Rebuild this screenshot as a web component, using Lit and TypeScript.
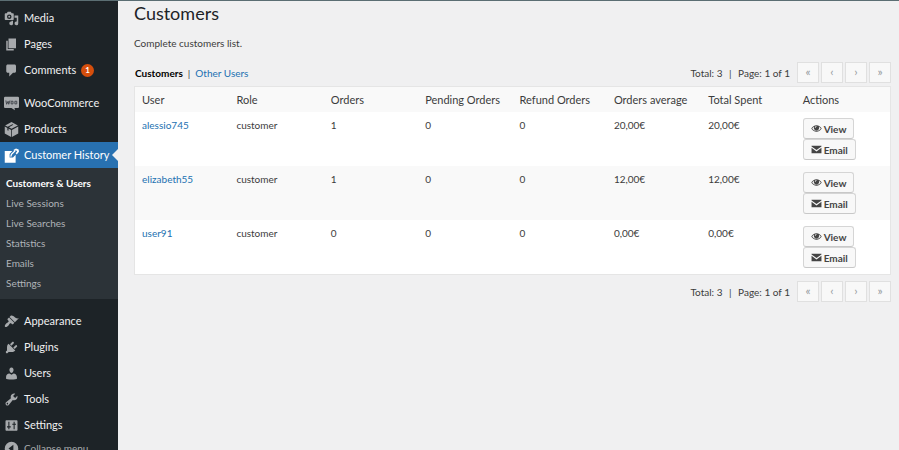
import { LitElement, html, css, svg, nothing } from "lit";
import type { TemplateResult } from "lit";
import { customElement, property } from "lit/decorators.js";
import { classMap } from "lit/directives/class-map.js";

const icons: Record<string, TemplateResult> = {
  media: svg`<path fill-rule="evenodd" d="M13 11V4c0-.55-.45-1-1-1h-1.670L9 1H5L3.670 3H2c-.55 0-1 .45-1 1v7c0 .55.45 1 1 1h10c.55 0 1-.45 1-1zM7 4.500a3 3 0 1 1 0 6 3 3 0 0 1 0-6z"/><circle cx="7" cy="7.500" r="1.300"/><path d="M14 6h5v10.500a2.500 2.500 0 1 1-2-2.450V9h-3zM10 13h2v3.500a2.500 2.500 0 1 1-2-2.450z"/>`,
  pages: svg`<path d="M6 15V2h10v13H6zm-1 1h8v2H3V5h2v11z"/>`,
  comments: svg`<path d="M5 2h9c1.100 0 2 .9 2 2v7c0 1.100-.9 2-2 2h-2l-5 5v-5H5c-1.100 0-2-.9-2-2V4c0-1.100.9-2 2-2z"/>`,
  woo: svg`<path d="M1.500 1h17Q20 1 20 2.500v12Q20 16 18.500 16H14l.5 3-4.500-3H1.500Q0 16 0 14.500v-12Q0 1 1.500 1z"/><path d="M2.500 6l1 5 2-4 .8 4 1.700-5M9.500 7h2.500v3.500H9.500zM14.500 7H17v3.500h-2.500z" fill="none" stroke="#3c4147" stroke-width="1.200"/>`,
  products: svg`<path d="M10 0l8.500 4.500L10 9 6.500 7l6-3.300-1.300-.7L5 6.200 1.500 4.500zM1 6l3.500 1.900v3l1.500.8V8.800L9.500 10.600V20L1 15.300zM19 6v9.300L10.500 20v-9.400z"/>`,
  history: svg`<path d="M1 4h10L7.500 8v4.500H12L15.500 9v10.500H1z"/><path d="M9 11.500l1-3 5-5" fill="none" stroke="currentColor" stroke-width="1.800"/><path d="M12.500 2.500L16 .5l3.500 1.500.5 3-3 3.500-1.500-1.500 2-2.500-1.500-1.500-2 1z"/>`,
  appearance: svg`<path d="M14.480 11.060L7.410 3.990l1.500-1.500c.5-.56 2.300-.47 3.510.32 1.210.8 1.430 1.280 2.910 2.100 1.180.64 2.450 1.260 4.450.85zm-.71.710L6.700 4.700 4.930 6.470c-.39.390-.39 1.020 0 1.410l1.060 1.060c.39.390.39 1.030 0 1.420-.6.600-1.430 1.110-2.210 1.690-.35.260-.7.530-1.010.840C1.430 14.230.4 16.080 1.400 17.070c.99 1 2.840-.03 4.180-1.360.31-.31.580-.66.850-1.020.57-.78 1.080-1.610 1.690-2.210.39-.39 1.020-.39 1.410 0l1.060 1.060c.39.390 1.020.39 1.410 0z"/>`,
  plugins: svg`<path d="M13.110 4.360L9.870 7.600 8 5.730l3.240-3.240c.35-.34 1.050-.2 1.560.32.520.51.660 1.210.31 1.550zm-8 1.770l.91-1.120 9.010 9.010-1.190.840c-.71.710-2.630 1.160-3.820 1.160H6.140L4.900 17.260c-.59.590-1.540.59-2.120 0-.59-.58-.59-1.530 0-2.120l1.240-1.240v-3.880c0-1.130.4-3.190 1.090-3.890zm7.260 3.970l3.240-3.240c.34-.35 1.040-.21 1.550.31.520.51.660 1.210.31 1.550l-3.240 3.250z"/>`,
  users: svg`<path d="M10 9.250c-2.270 0-2.730-3.440-2.730-3.440C7 4.020 7.820 2 9.970 2c2.160 0 2.980 2.020 2.710 3.810 0 0-.41 3.440-2.680 3.440zm0 2.570L12.720 10c2.390 0 4.520 2.330 4.520 4.530v2.490s-3.650 1.130-7.240 1.130c-3.650 0-7.240-1.130-7.240-1.130v-2.490c0-2.250 1.940-4.480 4.470-4.480z"/>`,
  tools: svg`<path d="M16.680 9.770c-1.340 1.340-3.300 1.670-4.950.99l-5.410 6.520c-.99.990-2.590.99-3.580 0s-.99-2.590 0-3.570l6.520-5.420c-.68-1.650-.35-3.610.99-4.950 1.280-1.280 3.120-1.620 4.720-1.060l-2.890 2.890 2.820 2.820 2.860-2.870c.53 1.580.18 3.390-1.080 4.650zM3.810 16.210c.4.390 1.040.39 1.430 0 .4-.4.400-1.040 0-1.430-.39-.4-1.030-.4-1.430 0-.39.390-.39 1.030 0 1.430z"/>`,
  settings: svg`<path fill-rule="evenodd" d="M18 16V4c0-.55-.45-1-1-1H3c-.55 0-1 .45-1 1v12c0 .55.450 1 1 1h14c.55 0 1-.45 1-1zM5.800 5h1.400v6H9v1.500H7.200V15H5.800v-2.500H4V11h1.800zM12.800 5h1.400v2.500H16V9h-1.800v6h-1.400V9H11V7.500h1.800z"/>`,
  collapse: svg`<path fill-rule="evenodd" d="M10 1a9 9 0 1 1 0 18 9 9 0 0 1 0-18zm2.500 4L6 10l6.500 5z"/>`,
  view: svg`<path fill-rule="evenodd" d="M10 4c4 0 7.500 2.500 9.500 6-2 3.500-5.500 6-9.500 6S2.500 13.500.5 10C2.500 6.500 6 4 10 4zM5.800 6.800C4.200 7.600 3 8.700 2.100 10c1.800 2.700 4.600 4.500 7.900 4.500s6.100-1.800 7.900-4.500c-.9-1.300-2.100-2.400-3.700-3.200a4.800 4.800 0 1 1-8.400 0zM10 5.500A3.300 3.300 0 0 0 7 9h1.200A2 2 0 0 1 10 6.700z"/>`,
  email: svg`<path d="M1 3h18v1.500L10 11 1 4.500zM1 7l9 6.500L19 7v10H1z"/>`,
};

const icon = (name: string) =>
  html`<svg class="icon" viewBox="0 0 20 20" fill="currentColor" aria-hidden="true">${icons[name]}</svg>`;

const base = css`
  * {
    box-sizing: border-box;
  }
  a {
    color: inherit;
    text-decoration: none;
  }
  ul {
    list-style: none;
    margin: 0;
    padding: 0;
  }
`;

interface MenuItem {
  label: string;
  icon: string;
  badge?: number;
  children?: string[];
}

const menu: MenuItem[][] = [
  [
    { label: "Media", icon: "media" },
    { label: "Pages", icon: "pages" },
    { label: "Comments", icon: "comments", badge: 1 },
  ],
  [
    { label: "WooCommerce", icon: "woo" },
    { label: "Products", icon: "products" },
    {
      label: "Customer History",
      icon: "history",
      children: ["Customers & Users", "Live Sessions", "Live Searches", "Statistics", "Emails", "Settings"],
    },
  ],
  [
    { label: "Appearance", icon: "appearance" },
    { label: "Plugins", icon: "plugins" },
    { label: "Users", icon: "users" },
    { label: "Tools", icon: "tools" },
    { label: "Settings", icon: "settings" },
  ],
];

@customElement("admin-menu")
export class AdminMenu extends LitElement {
  static styles = [
    base,
    css`
      :host {
        display: block;
        background: #1d2327;
        color: #f0f0f1;
        font-size: 11px;
        padding-top: 4px;
      }
      .group {
        margin-bottom: 7px;
      }
      .item {
        display: flex;
        align-items: center;
        gap: 5px;
        width: 100%;
        height: 26px;
        padding: 0 0 0 4px;
        border: 0;
        background: none;
        font: inherit;
        color: inherit;
        white-space: nowrap;
        position: relative;
      }
      .icon {
        width: 15px;
        height: 15px;
        flex: none;
        color: #a7aaad;
      }
      .active {
        background: #2871b1;
        color: #fff;
      }
      .active .icon {
        color: #fff;
      }
      .active::after {
        content: "";
        position: absolute;
        right: 0;
        top: 7px;
        border: 6px solid transparent;
        border-left-width: 0;
        border-right-color: #f0f0f1;
      }
      .badge {
        width: 13px;
        height: 13px;
        border-radius: 50%;
        background: #d54e0c;
        color: #fff;
        font-size: 8px;
        font-weight: 700;
        line-height: 13px;
        text-align: center;
      }
      .submenu {
        background: #2c3338;
        padding: 5px 0 6px;
        color: #b0b4b8;
        font-size: 10px;
        line-height: 20px;
      }
      .sub {
        display: block;
        padding-left: 6px;
        white-space: nowrap;
      }
      .current {
        color: #fff;
        font-weight: 700;
      }
      .last {
        padding-top: 2px;
        margin-bottom: 0;
      }
      .collapse {
        height: 20px;
        color: #a7aaad;
        font-size: 10px;
      }
    `,
  ];

  render() {
    return html`<nav aria-label="Main menu">
      ${menu.map(
        (group, g) => html`<ul class=${classMap({ group: true, last: g === menu.length - 1 })}>
          ${group.map(
            (item) => html`<li>
              <a href="#" class=${classMap({ item: true, active: !!item.children })}>
                ${icon(item.icon)}<span>${item.label}</span>
                ${item.badge ? html`<span class="badge">${item.badge}</span>` : nothing}
              </a>
              ${item.children
                ? html`<ul class="submenu">
                    ${item.children.map(
                      (label, i) => html`<li><a href="#" class=${classMap({ sub: true, current: i === 0 })}>${label}</a></li>`,
                    )}
                  </ul>`
                : nothing}
            </li>`,
          )}
        </ul>`,
      )}
      <button class="item collapse" type="button">${icon("collapse")}<span>Collapse menu</span></button>
    </nav>`;
  }
}

@customElement("list-pager")
export class ListPager extends LitElement {
  @property({ type: Number }) total = 0;

  static styles = [
    base,
    css`
      :host {
        display: flex;
        justify-content: flex-end;
        align-items: center;
        gap: 7px;
        white-space: nowrap;
      }
      .buttons {
        display: flex;
        gap: 2px;
      }
      .page {
        width: 22px;
        height: 21px;
        padding: 0 0 2px;
        border: 1px solid #e0e0e0;
        background: #f8f8f8;
        color: #969ba0;
        font: inherit;
        font-size: 12px;
        line-height: 16px;
      }
      .bar {
        margin: 0 4px;
      }
    `,
  ];

  render() {
    return html`<span>Total: ${this.total} <span class="bar">|</span> Page: 1 of 1</span>
      <div class="buttons">
        <button class="page" type="button" aria-label="First page" disabled>«</button>
        <button class="page" type="button" aria-label="Previous page" disabled>‹</button>
        <button class="page" type="button" aria-label="Next page" disabled>›</button>
        <button class="page" type="button" aria-label="Last page" disabled>»</button>
      </div>`;
  }
}

const columns = ["User", "Role", "Orders", "Pending Orders", "Refund Orders", "Orders average", "Total Spent", "Actions"];

const customers = [
  ["alessio745", "customer", "1", "0", "0", "20,00€", "20,00€"],
  ["elizabeth55", "customer", "1", "0", "0", "12,00€", "12,00€"],
  ["user91", "customer", "0", "0", "0", "0,00€", "0,00€"],
];

@customElement("customer-table")
export class CustomerTable extends LitElement {
  static styles = [
    base,
    css`
      :host {
        display: block;
        border: 1px solid #e5e5e5;
        background: #fff;
      }
      .table {
        width: 100%;
        table-layout: fixed;
        border-collapse: collapse;
      }
      .head {
        height: 25px;
        padding: 0 0 0 7px;
        background: #f9f9f9;
        font-size: 11px;
        font-weight: 400;
        text-align: left;
        white-space: nowrap;
      }
      .row:nth-child(even) {
        background: #f9f9f9;
      }
      .cell {
        height: 54px;
        padding: 6px 0 5px 7px;
        vertical-align: top;
        line-height: 14px;
      }
      .user {
        color: #2271b1;
      }
      .actions {
        display: flex;
        flex-direction: column;
        align-items: flex-start;
      }
      .action {
        display: flex;
        align-items: center;
        gap: 2px;
        height: 21px;
        padding: 0 7px;
        border: 1px solid #d5d5d5;
        border-bottom-color: #c8c8c8;
        border-radius: 3px;
        background: #f8f8f8;
        color: #444;
        font: inherit;
        font-weight: 700;
      }
      .icon {
        width: 11px;
        height: 11px;
      }
    `,
  ];

  render() {
    return html`<table class="table">
      <thead>
        <tr>
          ${columns.map((c) => html`<th class="head" scope="col">${c}</th>`)}
        </tr>
      </thead>
      <tbody>
        ${customers.map(
          (row) => html`<tr class="row">
            ${row.map((v, i) => html`<td class="cell">${i === 0 ? html`<a class="user" href="#">${v}</a>` : v}</td>`)}
            <td class="cell">
              <div class="actions">
                <button class="action" type="button">${icon("view")}View</button>
                <button class="action" type="button">${icon("email")}Email</button>
              </div>
            </td>
          </tr>`,
        )}
      </tbody>
    </table>`;
  }
}

@customElement("app-root")
export class AppRoot extends LitElement {
  static styles = [
    base,
    css`
      :host {
        display: grid;
        grid-template-columns: 118px 1fr;
        height: 100vh;
        overflow: hidden;
        border-top: 1px solid #5b6e73;
        box-sizing: border-box;
        background: #f0f0f1;
        color: #3c3c3c;
        font-family: Lato, "Open Sans", sans-serif;
        font-size: 10px;
        line-height: 14px;
      }
      .main {
        padding: 0 8px 0 16px;
        min-width: 0;
      }
      .title {
        margin: 0;
        font-size: 18px;
        font-weight: 400;
        line-height: 24px;
        color: #1d2327;
      }
      .intro {
        margin: 11px 0 12px;
      }
      .toolbar {
        display: flex;
        justify-content: space-between;
        align-items: center;
        margin-bottom: 3px;
      }
      .tabs {
        display: flex;
        gap: 5px;
        padding-left: 1px;
      }
      .selected {
        color: #000;
        font-weight: 700;
      }
      .tab {
        color: #2271b1;
      }
      .footer {
        margin-top: 6px;
      }
    `,
  ];

  render() {
    return html`<admin-menu></admin-menu>
      <main class="main">
        <h1 class="title">Customers</h1>
        <p class="intro">Complete customers list.</p>
        <div class="toolbar">
          <div class="tabs">
            <a class="selected" href="#" aria-current="page">Customers</a><span>|</span><a class="tab" href="#">Other Users</a>
          </div>
          <list-pager total="3"></list-pager>
        </div>
        <customer-table></customer-table>
        <list-pager class="footer" total="3"></list-pager>
      </main>`;
  }
}
